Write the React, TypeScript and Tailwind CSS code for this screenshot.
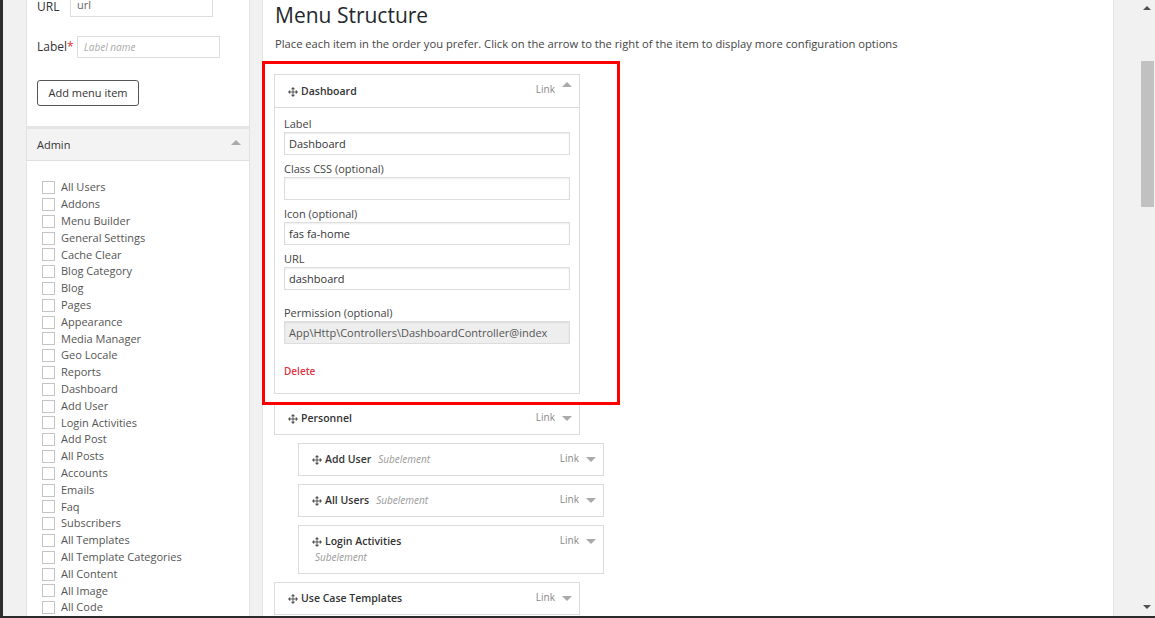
import React from 'react';

const adminLinks = [
  'All Users',
  'Addons',
  'Menu Builder',
  'General Settings',
  'Cache Clear',
  'Blog Category',
  'Blog',
  'Pages',
  'Appearance',
  'Media Manager',
  'Geo Locale',
  'Reports',
  'Dashboard',
  'Add User',
  'Login Activities',
  'Add Post',
  'All Posts',
  'Accounts',
  'Emails',
  'Faq',
  'Subscribers',
  'All Templates',
  'All Template Categories',
  'All Content',
  'All Image',
  'All Code',
];

const MoveIcon = () => (
  <svg width="10" height="10" viewBox="0 0 10 10" className="shrink-0 text-[#555]" fill="currentColor">
    <rect x="4.5" y="1.5" width="1" height="7" />
    <rect x="1.5" y="4.5" width="7" height="1" />
    <path d="M5 0 L7.2 2.2 L2.8 2.2 Z M5 10 L2.8 7.8 L7.2 7.8 Z M0 5 L2.2 2.8 L2.2 7.2 Z M10 5 L7.8 7.2 L7.8 2.8 Z" />
  </svg>
);

const Caret = ({ up }: { up?: boolean }) =>
  up ? (
    <span className="w-0 h-0 border-x-[5px] border-x-transparent border-b-[5px] border-b-[#aaa] mb-[15px]" />
  ) : (
    <span className="w-0 h-0 border-x-[5px] border-x-transparent border-t-[5px] border-t-[#aaa]" />
  );

type HeaderProps = { title: string; sub?: boolean; open?: boolean; wrap?: boolean };

const ItemHeader = ({ title, sub, open, wrap }: HeaderProps) => (
  <div className={open ? 'flex items-start justify-between pl-[13px] pr-[7px] pt-[9px] pb-[8px]' : 'flex items-start justify-between pl-[13px] pr-[7px] pt-[8px] pb-[8px]'}>
    <div className={wrap ? 'flex flex-col' : 'flex items-center'}>
      <div className="flex items-center h-[15px]">
        <MoveIcon />
        <span className="ml-[3px] text-[10.5px] font-semibold text-[#333] leading-[15px]">{title}</span>
        {sub && !wrap && (
          <span className="ml-[7px] text-[10px] italic text-[#999] leading-[15px]">Subelement</span>
        )}
      </div>
      {sub && wrap && (
        <span className="mt-[1px] pl-[3px] text-[10px] italic text-[#999] leading-[15px]">Subelement</span>
      )}
    </div>
    <div className="flex items-center h-[15px] gap-[7px]">
      <span className={open ? 'text-[10px] text-[#888] mb-[4px]' : 'text-[10px] text-[#888] mb-[2px]'}>Link</span>
      <Caret up={open} />
    </div>
  </div>
);

const Field = ({ label, value, disabled, className }: { label: string; value: string; disabled?: boolean; className?: string }) => (
  <div className={className}>
    <div className="h-[17px] leading-[17px] text-[11px] text-[#444]">{label}</div>
    <div
      className={
        disabled
          ? 'h-[23px] border border-[#ddd] bg-[#eee] px-[4px] text-[11px] leading-[21px] text-[#555] shadow-[inset_0_1px_2px_rgba(0,0,0,0.07)]'
          : 'h-[23px] border border-[#ddd] bg-white px-[4px] text-[11px] leading-[21px] text-[#333] shadow-[inset_0_1px_2px_rgba(0,0,0,0.07)]'
      }
    >
      {value}
    </div>
  </div>
);

const CollapsedItem = ({ title, sub, wrap }: { title: string; sub?: boolean; wrap?: boolean }) => (
  <div className={sub ? 'ml-[24px] w-[306px] border border-[#dcdcdc] bg-white mb-[8px]' : 'w-[306px] border border-[#dcdcdc] bg-white mb-[8px]'}>
    <ItemHeader title={title} sub={sub} wrap={wrap} />
  </div>
);

export default function App() {
  return (
    <div className="w-[1155px] h-[618px] overflow-hidden flex flex-col font-['Open_Sans',sans-serif] bg-[#f1f1f1]">
      <div className="flex flex-1 min-h-0">
        <div className="w-[3px] bg-[#2d2d2d]" />

        {/* left sidebar */}
        <div className="w-[259px] pl-[23px] pr-[12px]">
          <div className="h-full bg-white border-x border-[#e2e2e2] flex flex-col">
            <div className="px-[10px] pb-[20px]">
              <div className="flex items-center -mt-[5px] h-[23px]">
                <span className="text-[12px] text-[#333] w-[33px]">URL</span>
                <div className="w-[143px] h-[21px] border border-[#ddd] px-[6px] text-[11px] leading-[15px] text-[#666]">url</div>
              </div>
              <div className="flex items-center mt-[18px] h-[22px]">
                <span className="text-[12px] text-[#333] w-[40px]">
                  Label<span className="text-[#dc3232]">*</span>
                </span>
                <div className="w-[143px] h-[22px] border border-[#ddd] px-[6px] text-[10px] italic leading-[20px] text-[#aaa]">Label name</div>
              </div>
              <button className="mt-[22px] h-[26px] w-[102px] border border-[#555] rounded-[3px] bg-white text-[11px] text-[#333]">
                Add menu item
              </button>
            </div>
            <div className="border-t-[3px] border-[#e5e5e5] bg-[#f3f3f3] h-[36px] flex items-center justify-between pl-[10px] pr-[8px] border-b border-b-[#e0e0e0]">
              <span className="text-[11px] text-[#333] mt-[1px]">Admin</span>
              <span className="w-0 h-0 border-x-[5px] border-x-transparent border-b-[5px] border-b-[#aaa] mb-[4px]" />
            </div>
            <div className="pt-[18px] pl-[15px]">
              {adminLinks.map((l) => (
                <div key={l} className="flex items-center h-[16.8px]">
                  <span className="w-[13px] h-[13px] border border-[#c4c4c4] bg-white shrink-0" />
                  <span className="ml-[6px] text-[11px] text-[#555] whitespace-nowrap">{l}</span>
                </div>
              ))}
            </div>
          </div>
        </div>

        {/* main */}
        <div className="w-[852px] bg-white border-x border-[#e5e5e5] pl-[11px]">
          <h1 className="ml-[1px] text-[21px] leading-[30px] text-[#23282d]">Menu Structure</h1>
          <p className="ml-[1px] mt-[5px] text-[11.2px] leading-[18px] text-[#444]">
            Place each item in the order you prefer. Click on the arrow to the right of the item to display more configuration options
          </p>

          <div className="mt-[21px]">
            <div className="relative w-[306px] mb-[8px]">
              <div className="border border-[#dcdcdc] bg-white">
                <div className="border-b border-[#dcdcdc]">
                  <ItemHeader title="Dashboard" open />
                </div>
                <div className="px-[9px] pt-[7px] pb-[15px]">
                  <Field label="Label" value="Dashboard" />
                  <Field label="Class CSS (optional)" value="" className="mt-[5px]" />
                  <Field label="Icon (optional)" value="fas fa-home" className="mt-[5px]" />
                  <Field label="URL" value="dashboard" className="mt-[5px]" />
                  <Field label="Permission (optional)" value="App\Http\Controllers\DashboardController@index" disabled className="mt-[14px]" />
                  <div className="mt-[20px] text-[10px] font-semibold text-[#dc3545] leading-[14px]">Delete</div>
                </div>
              </div>
              <div className="absolute -left-[12px] -top-[13px] -right-[40px] -bottom-[11px] border-[3px] border-[#ff0000] pointer-events-none" />
            </div>

            <CollapsedItem title="Personnel" />
            <CollapsedItem title="Add User" sub />
            <CollapsedItem title="All Users" sub />
            <CollapsedItem title="Login Activities" sub wrap />
            <CollapsedItem title="Use Case Templates" />
          </div>
        </div>

        <div className="w-[25px]" />

        {/* scrollbar */}
        <div className="w-[16px] bg-[#f1f1f1] flex flex-col items-center">
          <span className="mt-[6px] w-0 h-0 border-x-[4px] border-x-transparent border-b-[4px] border-b-[#505050]" />
          <div className="mt-[51px] w-[13px] h-[146px] bg-[#c1c1c1]" />
          <div className="flex-1" />
          <span className="mb-[7px] w-0 h-0 border-x-[4px] border-x-transparent border-t-[4px] border-t-[#505050]" />
        </div>
      </div>
      <div className="h-[2px] bg-[#2b2b2b]" />
    </div>
  );
}
